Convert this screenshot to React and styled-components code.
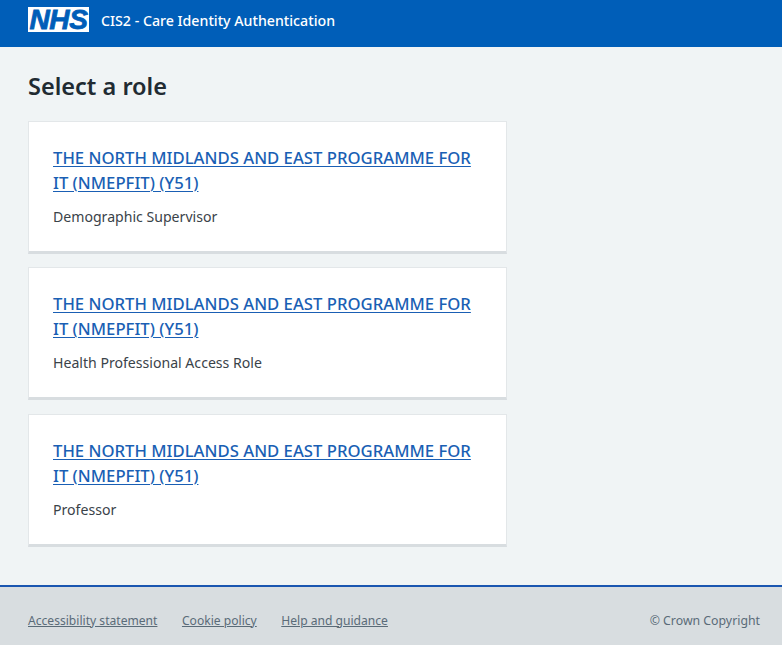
import styled, { createGlobalStyle } from 'styled-components';

const ROLES = ['Demographic Supervisor', 'Health Professional Access Role', 'Professor'];
const ORG_NAME = 'THE NORTH MIDLANDS AND EAST PROGRAMME FOR IT (NMEPFIT) (Y51)';

const GlobalStyle = createGlobalStyle`
  html, body {
    margin: 0;
    padding: 0;
    background: #f0f4f5;
    font-family: "Noto Sans", "Open Sans", Arial, sans-serif;
    color: #212b32;
  }
  * {
    box-sizing: border-box;
  }
`;

export default function App() {
  return (
    <Page>
      <GlobalStyle />
      <Header>
        <Logo>NHS</Logo>
        <ServiceName>CIS2 - Care Identity Authentication</ServiceName>
      </Header>

      <Main>
        <Title>Select a role</Title>
        <CardList>
          {ROLES.map((role) => (
            <Card key={role}>
              <OrgLink href="#">{ORG_NAME}</OrgLink>
              <RoleName>{role}</RoleName>
            </Card>
          ))}
        </CardList>
      </Main>

      <Footer>
        <FooterLinks>
          <FooterLink href="#">Accessibility statement</FooterLink>
          <FooterLink href="#">Cookie policy</FooterLink>
          <FooterLink href="#">Help and guidance</FooterLink>
        </FooterLinks>
        <Copyright>© Crown Copyright</Copyright>
      </Footer>
    </Page>
  );
}

const Page = styled.div`
  height: 645px;
  display: flex;
  flex-direction: column;
  overflow: hidden;
`;

const Header = styled.header`
  height: 47px;
  flex: none;
  display: flex;
  align-items: flex-start;
  gap: 12px;
  padding: 7px 28px 0;
  background: #005eb8;
`;

const Logo = styled.div`
  width: 61px;
  height: 25px;
  background: #ffffff;
  color: #005eb8;
  font-family: "Liberation Sans", Arial, sans-serif;
  font-size: 28px;
  font-weight: 700;
  font-style: italic;
  line-height: 25px;
  letter-spacing: -0.4px;
  text-align: center;
  -webkit-text-stroke: 0.8px #005eb8;
`;

const ServiceName = styled.div`
  color: #ffffff;
  font-size: 14.2px;
  font-weight: 500;
  line-height: 27px;
`;

const Main = styled.main`
  flex: 1;
  padding: 0 28px;
`;

const Title = styled.h1`
  margin: 25px 0 19.6px;
  font-size: 23.5px;
  font-weight: 600;
  line-height: 29px;
  color: #212b32;
`;

const CardList = styled.div`
  width: 479px;
  display: flex;
  flex-direction: column;
  gap: 13.3px;
`;

const Card = styled.div`
  height: 133.2px;
  padding: 23px 24px 0;
  background: #ffffff;
  border: 1px solid #e3e7e9;
  border-bottom: 3px solid #d8dde0;
`;

const OrgLink = styled.a`
  display: block;
  color: #1a5fb4;
  font-size: 16.7px;
  font-weight: 500;
  line-height: 25px;
  text-decoration: underline;
  text-decoration-thickness: 1px;
  text-underline-offset: 2px;
`;

const RoleName = styled.p`
  margin: 9px 0 0;
  font-size: 14.1px;
  line-height: 25px;
  color: #3a4349;
`;

const Footer = styled.footer`
  height: 60px;
  flex: none;
  display: flex;
  align-items: center;
  justify-content: space-between;
  padding: 9px 22px 0 28px;
  background: #d8dde0;
  border-top: 2px solid #1a56b0;
`;

const FooterLinks = styled.nav`
  display: flex;
  gap: 24.5px;
`;

const FooterLink = styled.a`
  color: #5a6b78;
  font-size: 12.1px;
  line-height: 20px;
  text-decoration: underline;
`;

const Copyright = styled.div`
  color: #5a6b78;
  font-size: 12.3px;
  line-height: 20px;
`;
